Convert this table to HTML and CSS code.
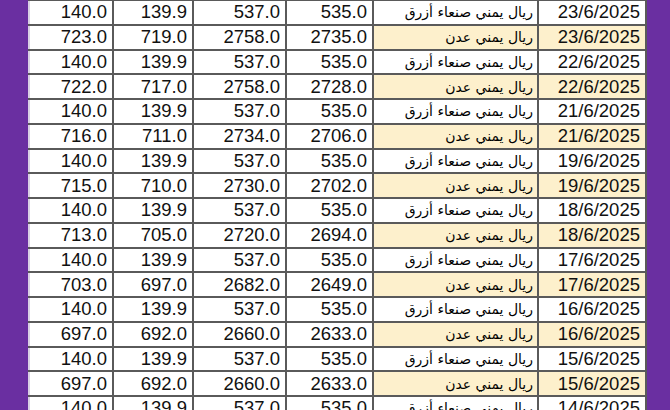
FILE: index.html
```html
<!DOCTYPE html>
<html lang="ar">
<head>
<meta charset="utf-8">
<link rel="stylesheet" href="styles.css">
</head>
<body>
<div class="frame">
<table class="rates">
<colgroup>
<col class="c1"><col class="c2"><col class="c3"><col class="c4"><col class="c5"><col class="c6">
</colgroup>
<tbody>
<tr><td>140.0</td><td>139.9</td><td>537.0</td><td>535.0</td><td class="cur">ريال يمني صنعاء أزرق</td><td class="date">23/6/2025</td></tr>
<tr class="aden"><td>723.0</td><td>719.0</td><td>2758.0</td><td>2735.0</td><td class="cur">ريال يمني عدن</td><td class="date">23/6/2025</td></tr>
<tr><td>140.0</td><td>139.9</td><td>537.0</td><td>535.0</td><td class="cur">ريال يمني صنعاء أزرق</td><td class="date">22/6/2025</td></tr>
<tr class="aden"><td>722.0</td><td>717.0</td><td>2758.0</td><td>2728.0</td><td class="cur">ريال يمني عدن</td><td class="date">22/6/2025</td></tr>
<tr><td>140.0</td><td>139.9</td><td>537.0</td><td>535.0</td><td class="cur">ريال يمني صنعاء أزرق</td><td class="date">21/6/2025</td></tr>
<tr class="aden"><td>716.0</td><td>711.0</td><td>2734.0</td><td>2706.0</td><td class="cur">ريال يمني عدن</td><td class="date">21/6/2025</td></tr>
<tr><td>140.0</td><td>139.9</td><td>537.0</td><td>535.0</td><td class="cur">ريال يمني صنعاء أزرق</td><td class="date">19/6/2025</td></tr>
<tr class="aden"><td>715.0</td><td>710.0</td><td>2730.0</td><td>2702.0</td><td class="cur">ريال يمني عدن</td><td class="date">19/6/2025</td></tr>
<tr><td>140.0</td><td>139.9</td><td>537.0</td><td>535.0</td><td class="cur">ريال يمني صنعاء أزرق</td><td class="date">18/6/2025</td></tr>
<tr class="aden"><td>713.0</td><td>705.0</td><td>2720.0</td><td>2694.0</td><td class="cur">ريال يمني عدن</td><td class="date">18/6/2025</td></tr>
<tr><td>140.0</td><td>139.9</td><td>537.0</td><td>535.0</td><td class="cur">ريال يمني صنعاء أزرق</td><td class="date">17/6/2025</td></tr>
<tr class="aden"><td>703.0</td><td>697.0</td><td>2682.0</td><td>2649.0</td><td class="cur">ريال يمني عدن</td><td class="date">17/6/2025</td></tr>
<tr><td>140.0</td><td>139.9</td><td>537.0</td><td>535.0</td><td class="cur">ريال يمني صنعاء أزرق</td><td class="date">16/6/2025</td></tr>
<tr class="aden"><td>697.0</td><td>692.0</td><td>2660.0</td><td>2633.0</td><td class="cur">ريال يمني عدن</td><td class="date">16/6/2025</td></tr>
<tr><td>140.0</td><td>139.9</td><td>537.0</td><td>535.0</td><td class="cur">ريال يمني صنعاء أزرق</td><td class="date">15/6/2025</td></tr>
<tr class="aden"><td>697.0</td><td>692.0</td><td>2660.0</td><td>2633.0</td><td class="cur">ريال يمني عدن</td><td class="date">15/6/2025</td></tr>
<tr><td>140.0</td><td>139.9</td><td>537.0</td><td>535.0</td><td class="cur">ريال يمني صنعاء أزرق</td><td class="date">14/6/2025</td></tr>
</tbody>
</table>
</div>
</body>
</html>
```
FILE: styles.css
```css
html, body {
  margin: 0;
  padding: 0;
  background: #6a2fa1;
  height: 100%;
  overflow: hidden;
}
.frame {
  margin-left: 28px;
  width: 617px;
  margin-top: -1px;
  background: #fff;
}
.rates {
  border-collapse: collapse;
  table-layout: fixed;
  width: 617px;
  direction: ltr;
  font-family: "Liberation Sans", Arial, sans-serif;
  font-size: 18.5px;
  color: #111;
}
.c1 { width: 84px; }
.c2 { width: 80px; }
.c3 { width: 93px; }
.c4 { width: 87px; }
.c5 { width: 165px; }
.c6 { width: 108px; }
.rates td {
  height: 24.75px;
  padding: 0 5px 0 0;
  border: 2px solid #5a5a5a;
  text-align: right;
  white-space: nowrap;
  overflow: hidden;
  line-height: 20px;
  box-sizing: border-box;
  background: #fff;
}
.rates td:first-child { border-left-color: #d9d0e4; }
.rates td.cur {
  direction: rtl;
  text-align: right;
  padding: 0 4px 0 0;
  font-family: "DejaVu Sans", sans-serif;
  font-size: 14px;
  color: #000;
}
.rates td.date { padding-right: 5px; }
.aden td.cur, .aden td.date { background: #fdf0cc; }
```
